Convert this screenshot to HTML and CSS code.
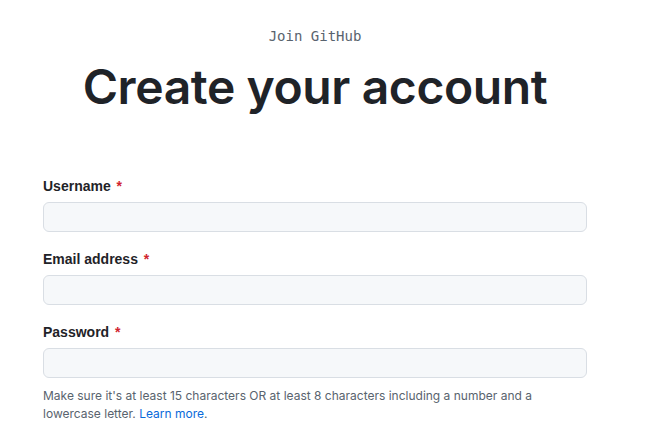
FILE: index.html
```html
<!DOCTYPE html>
<html lang="en">
<head>
<meta charset="utf-8">
<title>Join GitHub</title>
<link rel="stylesheet" href="styles.css">
</head>
<body>
<main class="signup">
  <p class="kicker">Join GitHub</p>
  <h1 class="title">Create your account</h1>
  <form class="form">
    <div class="field">
      <label class="label" for="username">Username <span class="req">*</span></label>
      <input class="input" id="username" type="text">
    </div>
    <div class="field">
      <label class="label" for="email">Email address <span class="req">*</span></label>
      <input class="input" id="email" type="email">
    </div>
    <div class="field">
      <label class="label" for="password">Password <span class="req">*</span></label>
      <input class="input" id="password" type="password">
      <p class="note">Make sure it's at least 15 characters OR at least 8 characters including a number and a lowercase letter. <a class="link" href="#">Learn more</a>.</p>
    </div>
  </form>
</main>
</body>
</html>
```

FILE: styles.css
```css
* { box-sizing: border-box; }
html, body { margin: 0; padding: 0; background: #ffffff; }
body {
  font-family: Inter, "Liberation Sans", Arial, sans-serif;
  color: #1f2328;
}
.signup {
  width: 544px;
  margin-left: 43px;
  padding-top: 26px;
}
.kicker {
  margin: 0;
  text-align: center;
  font-family: "DejaVu Sans Mono", "Liberation Mono", monospace;
  font-size: 14px;
  line-height: 20px;
  color: #59636e;
}
.title {
  margin: 11px 0 0;
  text-align: center;
  font-family: Inter, "Liberation Sans", sans-serif;
  font-weight: 600;
  font-size: 48px;
  line-height: 60px;
  letter-spacing: -0.4px;
  color: #1f2328;
}
.form {
  margin-top: 59px;
  display: flex;
  flex-direction: column;
  gap: 17px;
}
.field {
  display: flex;
  flex-direction: column;
  gap: 6px;
}
.label {
  font-family: "Liberation Sans", Arial, sans-serif;
  font-size: 14px;
  line-height: 20px;
  font-weight: 700;
  color: #1f2328;
}
.req { color: #d1242f; margin-left: 2px; }
.input {
  height: 30px;
  width: 100%;
  background: #f6f8fa;
  border: 1px solid #d9dee4;
  border-radius: 6px;
  margin: 0;
}
.note {
  margin: 3px 0 0;
  font-family: Inter, "Liberation Sans", sans-serif;
  font-size: 12px;
  line-height: 18px;
  color: #59636e;
}
.link { color: #0969da; text-decoration: none; }
```
